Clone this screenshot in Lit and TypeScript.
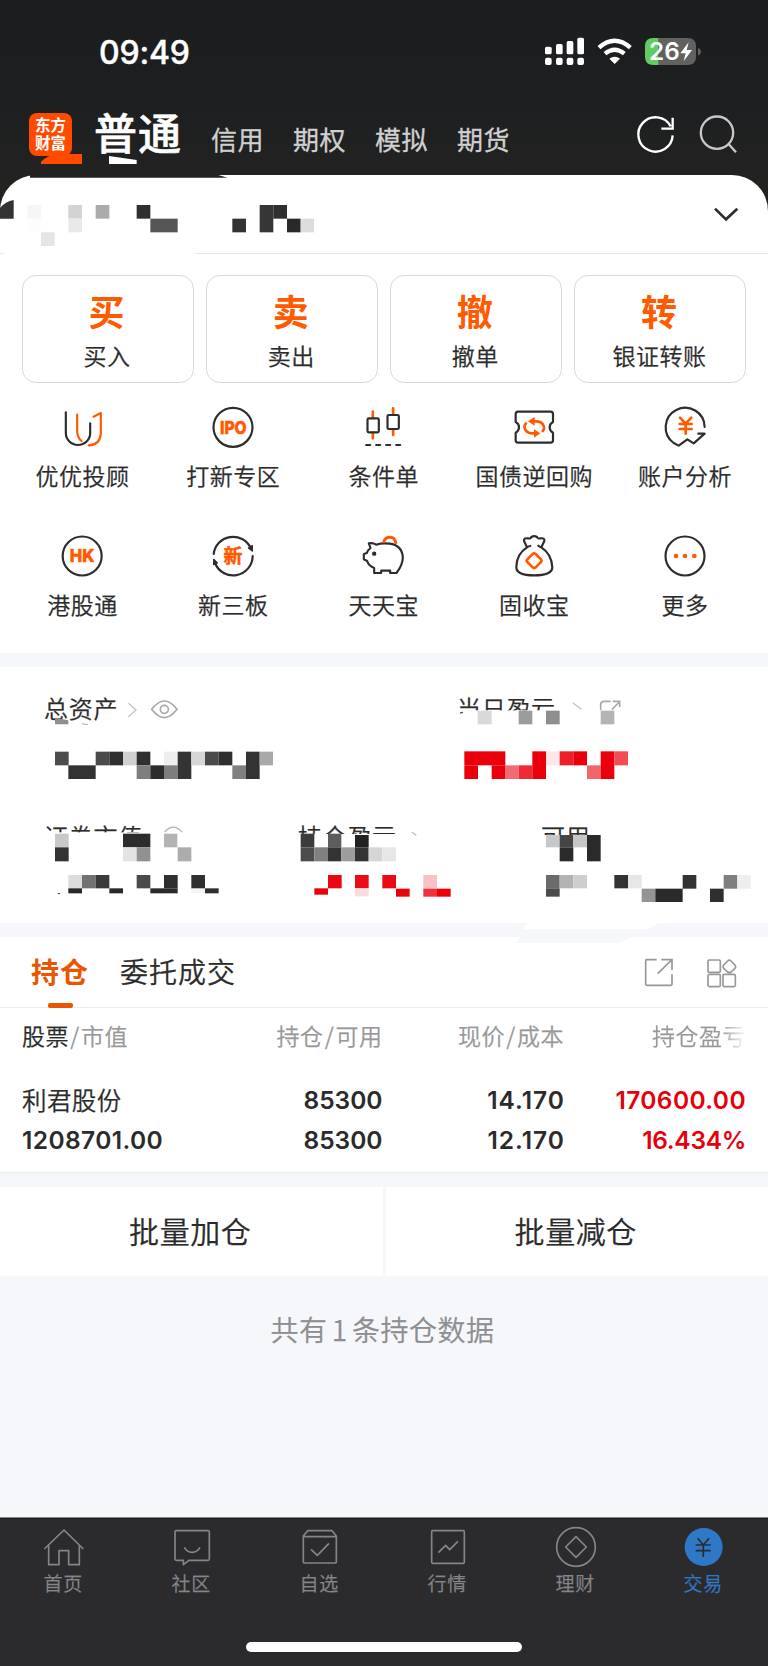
import { LitElement, html, svg, css } from "lit";
import { customElement } from "lit/decorators.js";

type Block = [number, number, number, number, string];

const blocks = (list: Block[]) =>
  list.map(([x, y, w, h, c]) => svg`<rect x=${x} y=${y} width=${w} height=${h} fill=${c}></rect>`);

const accountMask: Block[] = [
  [82, 615, 41, 41, "#f6f6f6"], [82, 656, 41, 41, "#fdfdfd"], [205, 615, 41, 41, "#d3d3d3"],
  [205, 656, 41, 41, "#e9e9e9"], [123, 697, 41, 41, "#e5e5e5"], [287, 615, 41, 41, "#ababab"],
  [410, 615, 41, 41, "#2f2f30"], [451, 656, 82, 41, "#555556"], [697, 656, 41, 41, "#333334"],
  [779, 615, 41, 82, "#363637"], [820, 615, 41, 41, "#2f2f30"], [861, 656, 41, 41, "#29292a"],
  [902, 656, 40, 41, "#dcdcdc"],
];

const assetMask: Block[] = [
  // total assets
  [165, 214, 41, 41, "#4c4c4d"], [205, 255, 82, 41, "#323233"], [287, 214, 41, 41, "#4a4a4b"],
  [328, 214, 41, 41, "#2f2f30"], [369, 214, 41, 41, "#d0d0d0"], [410, 214, 41, 41, "#303031"],
  [410, 255, 41, 41, "#7e7e7e"], [451, 255, 41, 41, "#2c2c2d"], [492, 214, 41, 41, "#eeeeee"],
  [492, 255, 41, 41, "#7e7e7e"], [533, 214, 41, 82, "#333334"], [574, 214, 41, 41, "#d6d6d6"],
  [615, 214, 41, 41, "#4a4a4b"], [656, 214, 41, 41, "#2f2f30"], [697, 255, 41, 41, "#808080"],
  [738, 214, 41, 82, "#333334"], [779, 214, 40, 41, "#a9a9a9"],
  // daily profit
  [1433, 91, 42, 41, "#d9d9d9"], [1556, 91, 41, 41, "#9c9c9c"], [1638, 91, 41, 41, "#8e8e8e"],
  [1802, 91, 41, 41, "#b4b4b4"],
  [1393, 213, 123, 42, "#ea000a"], [1393, 255, 41, 41, "#ea000a"], [1475, 255, 41, 41, "#ea000a"],
  [1515, 255, 41, 41, "#f36b72"], [1556, 255, 41, 41, "#ef2a34"], [1597, 213, 41, 83, "#ea000a"],
  [1638, 213, 41, 42, "#fce6e7"], [1679, 213, 41, 42, "#ee1f2a"], [1720, 213, 41, 42, "#ea000a"],
  [1761, 255, 41, 41, "#f3646b"], [1802, 213, 41, 83, "#ea000a"], [1843, 213, 41, 42, "#f24c55"],
  // securities value
  [165, 460, 41, 41, "#c8c8c8"], [165, 501, 41, 42, "#333334"], [369, 460, 82, 41, "#2c2c2d"],
  [369, 501, 41, 42, "#e3e3e3"], [410, 501, 41, 42, "#919191"], [492, 460, 40, 41, "#b3b3b3"],
  [533, 501, 41, 42, "#acacac"],
  [205, 584, 41, 40, "#dcdcdc"], [246, 584, 41, 40, "#727272"], [287, 584, 41, 40, "#3a3a3b"],
  [205, 624, 41, 15, "#29292a"], [328, 624, 41, 15, "#29292a"], [410, 584, 41, 40, "#4a4a4b"],
  [451, 624, 82, 15, "#2a2a2b"], [492, 584, 41, 40, "#2f2f30"], [574, 584, 41, 40, "#303031"],
  [574, 627, 41, 11, "#f4f4f4"], [615, 624, 41, 15, "#2f2f30"], [173, 638, 7, 3, "#444"],
  // position profit
  [902, 460, 41, 41, "#3c3c3d"], [902, 501, 41, 42, "#4c4c4d"], [943, 501, 41, 42, "#808080"],
  [984, 460, 40, 41, "#5d5d5e"], [984, 501, 40, 42, "#333334"], [1024, 501, 41, 42, "#9d9d9d"],
  [1065, 464, 41, 37, "#222223"], [1065, 501, 41, 42, "#333334"], [1106, 501, 41, 42, "#d5d5d5"],
  [1147, 501, 41, 42, "#e6e6e6"],
  [943, 624, 41, 19, "#ea000a"], [984, 584, 41, 40, "#ec0610"], [1065, 584, 41, 40, "#ec0c16"],
  [1065, 624, 41, 24, "#f9dcdd"], [1147, 584, 41, 40, "#ea0a14"], [1188, 625, 41, 24, "#ea000a"],
  [1270, 584, 41, 41, "#fac0c5"], [1270, 625, 41, 24, "#ef333d"], [1311, 625, 41, 24, "#ea000a"],
  // available
  [1638, 464, 41, 37, "#c8c8c8"], [1679, 464, 41, 37, "#454546"], [1679, 501, 41, 42, "#2a2a2b"],
  [1720, 464, 41, 37, "#c6c6c6"], [1761, 464, 41, 79, "#2a2a2b"],
  [1638, 584, 41, 40, "#6b6b6b"], [1638, 624, 41, 25, "#4c4c4d"], [1679, 584, 41, 40, "#b3b3b3"],
  [1720, 584, 41, 40, "#cecece"], [1843, 584, 41, 40, "#333334"], [1884, 584, 41, 40, "#e6e6e6"],
  [1925, 625, 41, 40, "#949494"], [1966, 625, 82, 40, "#2a2a2b"], [2048, 584, 41, 41, "#333334"],
  [2130, 625, 41, 40, "#2f2f30"], [2171, 584, 41, 41, "#7f7f7f"], [2212, 584, 40, 41, "#eeeeee"],
];

const primary = [["买", "买入"], ["卖", "卖出"], ["撤", "撤单"], ["转", "银证转账"]];

const tools = [
  { label: "优优投顾", box: "175.5 429 144 144", art: svg`
    <path d="M199 457V520A36.500 35 0 0 0 272 520V490"></path>
    <path class="o" d="M233 464V512Q233 532 246 543M282 470L304 459V520Q302 554 268 556"></path>` },
  { label: "打新专区", box: "627 429 144 144", art: svg`
    <circle cx="699" cy="502" r="58.500"></circle>
    <text class="t" x="700" y="521" font-size="52" textLength="80" lengthAdjust="spacingAndGlyphs">IPO</text>` },
  { label: "条件单", box: "1078.500 429 144 144", art: svg`
    <path class="o w" d="M1120 455V474M1120 518V535M1181 445V464M1181 508V525"></path>
    <rect x="1104" y="475" width="34" height="42" rx="4"></rect><rect x="1164" y="465" width="34" height="42" rx="4"></rect>
    <path d="M1100 555H1112M1130 555H1142M1160 555H1172M1190 555H1202"></path>` },
  { label: "国债逆回购", box: "380 429 144 144", art: svg`
    <path d="M404 455H502Q509 455 509 463V486Q499 491 499 502Q499 513 509 518V541Q509 548 502 548H404Q397 548 397 541V518Q407 513 407 502Q407 491 397 486V463Q397 455 404 455Z"></path>
    <path class="o w" d="M428 490Q420 498 426 509Q432 520 446 520H458M478 513Q486 504 479 494Q474 484 458 484H448"></path>
    <path class="f" d="M454 471V497L434 484ZM452 508V533L471 520Z"></path>` },
  { label: "账户分析", box: "832 429 144 144", art: svg`
    <path d="M963 501A58.500 58.500 0 1 0 870 549L885 557L911 538L930 550L963 521H944"></path>
    <path class="o w" d="M889 473L906 491L923 473M906 491V521M888 492H924M888 507H924"></path>` },
  { label: "港股通", box: "175.500 816 144 144", art: svg`
    <circle cx="248" cy="888" r="58.500"></circle>
    <text class="t" x="248" y="907" font-size="52" textLength="74" lengthAdjust="spacingAndGlyphs">HK</text>` },
  { label: "新三板", box: "627 816 144 144", art: svg`
    <path d="M641 882A58.500 58.500 0 0 1 752 864M758 888A58.500 58.500 0 0 1 645 909"></path>
    <path class="head-mark" d="M745 864L757 857V873ZM652 909L641 914V898Z"></path>
    <text class="t c" x="699" y="908" font-size="57">新</text>` },
  { label: "天天宝", box: "1078.500 816 144 144", art: svg`
    <g transform="translate(1050 810)"><path d="M58 40Q71 38 80 44Q98 38 120 41Q158 46 160 82Q160 105 141 129H122V122H95V129H74V114Q57 107 53 93L43 88V72L52 69Q55 60 63 54Z"></path>
    <path class="o x" d="M103 35Q107 22 122 22Q135 22 139 38"></path><circle cx="74" cy="71" r="6.500" fill="#2d2d2e" stroke="none"></circle></g>` },
  { label: "固收宝", box: "380 816 144 144", art: svg`
    <path d="M431 862L422 843Q421 833 434 835Q443 837 444 831Q453 826 461 831Q463 837 471 835Q485 833 483 843L474 862M431 862Q436 858 441 858M474 862Q468 860 465 857M431 862Q399 882 399 922Q400 946 452 946Q506 946 507 922Q505 882 474 862"></path>
    <path class="o w" d="M448 882Q452 878 457 882L473 898Q476 902 473 906L457 922Q452 926 448 922L432 906Q428 902 432 898Z"></path>` },
  { label: "更多", box: "832 816 144 144", art: svg`
    <circle cx="904" cy="888" r="58.500"></circle>
    <g fill="#ff5a00" stroke="none"><circle cx="877" cy="888" r="7"></circle><circle cx="904" cy="888" r="7"></circle><circle cx="932" cy="888" r="7"></circle></g>` },
];

const tabs = [
  { label: "首页", box: "121 66 144 144", art: svg`<path d="M134 144L193 87L251 144M147 134V191H178V149H207V191H239V134"></path>` },
  { label: "社区", box: "504 66 144 144", art: svg`<path d="M529 89H624Q628 89 628 93V174Q628 178 624 178H567L550 191V178H529Q525 178 525 174V93Q525 89 529 89ZM553 139Q561 154 576 154Q592 154 600 139"></path>` },
  { label: "自选", box: "888 66 144 144", art: svg`<path d="M923 89H996L1009 105V182Q1009 186 1005 186H914Q910 186 910 182V105ZM910 107H1009M933 145L952 163L987 127"></path>` },
  { label: "行情", box: "120 66 144 144", art: svg`<rect x="143" y="89" width="98" height="98" rx="3"></rect><path d="M163 155L185 133L197 146L222 121"></path>` },
  { label: "理财", box: "504 66 144 144", art: svg`<circle cx="576" cy="138" r="58"></circle><path d="M576 107L607 138L576 169L545 138Z"></path>` },
  { label: "交易", box: "889 66 144 144", on: true, art: svg`<circle cx="960" cy="138" r="57" fill="#2f78c8" stroke="none"></circle><path stroke="#2b2b2d" d="M942 112L959 132L976 112M959 132V168M936 132H981M936 149H981"></path>` },
];

@customElement("app-root")
export class AppRoot extends LitElement {
  static styles = css`
    :host { display: block; width: 768px; height: 1666px; overflow: hidden; background: #f6f7fa; color: #2b2b2c;
      font-family: "Noto Sans CJK SC", sans-serif; font-weight: 350; letter-spacing: 0.5px; -webkit-text-stroke: 0.25px currentColor; }
    * { box-sizing: border-box; }
    svg { display: block; overflow: visible; flex: none; }
    .page { display: flex; flex-direction: column; height: 1666px; }
    .top { background: linear-gradient(#1c1d1f, #1e1f21 110px, #222221 175px); height: 175px; flex: none; -webkit-text-stroke: 0; }
    .status { height: 104px; padding: 35px 64px 0 99px; display: flex; justify-content: space-between; }
    .clock { font: 500 32px/34px Inter, sans-serif; color: #fff; letter-spacing: -0.2px; padding-top: 1px; -webkit-text-stroke: 0.4px #fff; }
    .head { display: flex; height: 71px; align-items: flex-start; padding-left: 29px; }
    .logo { width: 43px; height: 43px; margin-top: 9px; border-radius: 8px; background: #ff4a00; color: #fff;
      font-size: 15.500px; line-height: 18px; font-weight: 700; letter-spacing: 0; text-align: center; padding-top: 2px; position: relative; }
    .shard { position: absolute; left: 0; top: 0; }
    .main { font-size: 43px; font-weight: 500; color: #fff; line-height: 60px; margin: -3px 0 0 22px; letter-spacing: 1px; position: relative; -webkit-text-stroke: 0.6px #fff; }
    .main .shard { top: 1px; }
    .modes { display: flex; gap: 29px; margin: 18px 0 0 29px; font-size: 26px; line-height: 34px; color: #d0d0d0; font-weight: 400; -webkit-text-stroke: 0.3px #d0d0d0; }
    .actions { margin: 1px 26px 0 auto; }
    .card { background: linear-gradient(#222221 36px, #fff 36px); height: 79px; flex: none; }
    .sheet { background: #fff; border-radius: 36px 36px 0 0; height: 79px; }
    .ops { background: #fff; height: 398.500px; flex: none; padding: 21px 22px 0 21.500px; }
    .primary { display: grid; grid-template-columns: repeat(4, 172px); justify-content: space-between; }
    .btn { height: 108px; border: 1px solid #d9d9d9; border-radius: 14px; text-align: center; }
    .big { color: #ff5a00; font-weight: 700; font-size: 36px; line-height: 40px; margin: 14px 2px 0 0; letter-spacing: 0; -webkit-text-stroke: 0; }
    .small { font-size: 23px; line-height: 30px; margin: 10px 1px 0 0; }
    .tools { display: grid; grid-template-columns: repeat(5, 150.600px); margin: 20px -15px 0 -14.500px; row-gap: 37px; }
    .tool { height: 92px; display: flex; flex-direction: column; align-items: center; font-size: 23px; line-height: 30px; white-space: nowrap; }
    .tool svg { fill: none; stroke: #2d2d2e; stroke-width: 6.500; stroke-linecap: round; stroke-linejoin: round; }
    .tool .o { stroke: #ff5a00; }
    .tool .w { stroke-width: 8; }
    .tool .x { stroke-width: 9; }
    .tool .f { fill: #ff5a00; stroke: none; }
    .tool .head-mark { fill: #2d2d2e; stroke-width: 4; }
    .tool .t { fill: #ff5a00; stroke: #ff5a00; stroke-width: 1.500; font-family: Inter, sans-serif; font-weight: 800; text-anchor: middle; letter-spacing: 0; -webkit-text-stroke: 1px #ff5a00; }
    .tool .t.c { font-family: "Noto Sans CJK SC", sans-serif; font-weight: 700; }
    .tool span { margin: 8.500px 0 0 0.500px; }
    .assets { margin-top: 14px; height: 256.500px; flex: none; background: #fff; position: relative; font-size: 24px; line-height: 32px; padding-top: 25px; }
    .line1 { display: grid; grid-template-columns: 413px 1fr; padding-left: 44px; letter-spacing: 0.700px; }
    .line2 { display: grid; grid-template-columns: 254px 243px 1fr; padding-left: 44px; margin-top: 96px; letter-spacing: 0.700px; }
    .mask { position: absolute; left: 0; top: 0; }
    .band { height: 14px; flex: none; position: relative; }
    .tabs { height: 71px; flex: none; background: #fff; border-bottom: 1px solid #ebecee; display: flex; align-items: flex-start; padding: 15px 30px 0 31px; font-size: 28px; line-height: 38px; }
    .tab { margin-right: 31px; letter-spacing: 1px; }
    .tab.on { color: #ea5504; font-weight: 700; -webkit-text-stroke: 0; }
    .tab.on::after { content: ""; display: block; width: 25px; height: 5px; border-radius: 2px; background: #ea5504; margin: 12.500px 0 0 16.500px; }
    .tabs svg { margin-left: auto; margin-top: 4px; }
    .table { background: #fff; height: 164.500px; flex: none; border-bottom: 1px solid #ececee; padding: 11px 22px 0; }
    .row { display: grid; grid-template-columns: 180px 180.500px 181.500px 182px; text-align: right; }
    .row > :first-child { text-align: left; }
    .cap { color: #98989a; font-size: 23px; line-height: 32px; }
    .cap b { color: #2b2b2c; font-weight: 350; }
    .cap i { font-style: normal; margin: 0 1.200px; }
    .fade { background: linear-gradient(90deg, #98989a 72%, #ffffff 101%); -webkit-background-clip: text; background-clip: text; color: transparent; }
    .vals { font: 600 24.500px/40px Inter, sans-serif; letter-spacing: 0; -webkit-text-stroke: 0; }
    .vals .name { font-family: "Noto Sans CJK SC", sans-serif; font-size: 24.500px; font-weight: 350; letter-spacing: 0.400px; -webkit-text-stroke: 0.25px #2b2b2c; }
    .vals.first { margin-top: 29px; }
    .price { letter-spacing: 1px; margin-right: -1px; }
    .wide { letter-spacing: 0.400px; }
    .tight { letter-spacing: -0.300px; }
    .red { color: #e6000c; }
    .batch { margin-top: 14.500px; height: 89px; flex: none; display: grid; grid-template-columns: 1fr 1fr; gap: 3px; text-align: center; font-size: 30px; line-height: 86px; letter-spacing: 0.600px; }
    .batch div { background: #fff; padding-right: 2px; }
    .foot { flex: 1; text-align: center; padding: 33px 3px 0 0; font-size: 28px; line-height: 40px; color: #8e8e90; word-spacing: -2.500px; }
    .nav { height: 148.500px; flex: none; background: #2b2b2d; border-top: 1px solid #1a1a1b; box-shadow: 0 -1px #8a8a8c; color: #858489; }
    .items { display: grid; grid-template-columns: repeat(6, 128px); height: 123.500px; padding-top: 4px; }
    .item { display: flex; flex-direction: column; align-items: center; font-size: 19px; line-height: 26px; }
    .item svg { fill: none; stroke: #858489; stroke-width: 5; stroke-linejoin: round; }
    .item span { margin: -1px 1.500px 0 0; letter-spacing: 0.700px; }
    .item.on { color: #2f78c8; }
    .home { width: 276px; height: 9.500px; border-radius: 5px; background: #fff; margin: 0 auto; }
  `;

  render() {
    return html`<div class="page">
      <div class="top">
        <div class="status">
          <div class="clock">09:49</div>
          <svg width="160" height="33" viewBox="480 105 480 99">
            <g fill="#fff">
              <rect x="483" y="140" width="20" height="23" rx="5"></rect><rect x="516" y="132" width="20" height="31" rx="5"></rect>
              <rect x="548" y="123" width="20" height="40" rx="5"></rect><rect x="580" y="113" width="20" height="50" rx="5"></rect>
              <rect x="483" y="173" width="20" height="22" rx="6"></rect><rect x="516" y="173" width="20" height="22" rx="6"></rect>
              <rect x="548" y="173" width="20" height="22" rx="6"></rect><rect x="580" y="173" width="20" height="22" rx="6"></rect>
              <path d="M676 176Q692 164 708 176L692 192Z"></path>
            </g>
            <path d="M645 143Q692 102 739 143M663 161Q692 137 721 161" fill="none" stroke="#fff" stroke-width="13"></path>
            <path d="M808 114H824V195H808Q783 195 783 170V139Q783 114 808 114Z" fill="#62cc63"></path>
            <path d="M824 114H911Q936 114 936 139V170Q936 195 911 195H824Z" fill="#616162"></path>
            <path d="M942 143Q951 147 951 155Q951 163 942 167Z" fill="#616162"></path>
            <text x="795" y="181" font-size="71" font-family="Inter, sans-serif" font-weight="600" letter-spacing="0" fill="#fff" textLength="92" lengthAdjust="spacingAndGlyphs">26</text>
            <path d="M914 127L889 160H905L899 184L924 150H908Z" fill="#fff"></path>
          </svg>
        </div>
        <div class="head">
          <div class="logo">东方<br>财富
            <svg class="shard" width="60" height="60" viewBox="87 339 180 180"><path fill="#ff4a00" d="M123 486Q143 463 180 462H246V492H123Z"></path></svg>
          </div>
          <div class="main">普通
            <svg class="shard" width="90" height="60" viewBox="282 306 270 180"><path fill="#fff" d="M327 468L410 480V492H327Z"></path></svg>
          </div>
          <div class="modes"><span>信用</span><span>期权</span><span>模拟</span><span>期货</span></div>
          <svg class="actions" width="108" height="60" viewBox="750 313 324 180" fill="none" stroke-width="7">
            <path stroke="#fff" d="M866 404A51.500 51.500 0 1 1 860 377M866 351V384H832"></path>
            <g stroke="#c8c8c8"><circle cx="999" cy="396" r="48.500"></circle><path d="M1033 429L1056 455"></path></g>
          </svg>
        </div>
      </div>
      <div class="card"><div class="sheet">
        <svg width="768" height="78" viewBox="0 525 2304 234">
          <path fill="#222324" d="M90 523H648L682 533H90Z"></path>
          <path fill="#333334" d="M-1 625Q15 605 41 600V656H-1Z"></path>
          ${blocks(accountMask)}
          <path d="M2145 626L2178 658L2212 626" stroke="#2d2d2e" stroke-width="8" fill="none"></path>
          <path d="M0 760.500H10M585 760.500H2304" stroke="#e8e8ea" stroke-width="3"></path>
        </svg>
      </div></div>
      <div class="ops">
        <div class="primary">${primary.map(([a, b]) => html`<div class="btn"><div class="big">${a}</div><div class="small">${b}</div></div>`)}</div>
        <div class="tools">${tools.map((t) => html`<div class="tool"><svg width="48" height="48" viewBox=${t.box}>${t.art}</svg><span>${t.label}</span></div>`)}</div>
      </div>
      <div class="assets">
        <div class="line1"><span>总资产</span><span>当日盈亏</span></div>
        <div class="line2"><span>证券市值</span><span>持仓盈亏</span><span>可用</span></div>
        <svg class="mask" width="768" height="256" viewBox="0 -40 2304 768">
          <path d="M385 69L408 89L385 109" fill="none" stroke="#c4c4c6" stroke-width="4"></path>
          <g fill="none" stroke="#a9a9ab" stroke-width="5"><path d="M455 87Q493 37 531 87Q493 137 455 87Z"></path><circle cx="493" cy="87" r="12"></circle></g>
          <path d="M1718 67L1744 87" stroke="#c4c4c6" stroke-width="4"></path>
          <path d="M1802 90V72Q1802 63 1812 63H1832M1836 87L1858 65M1838 63H1859V80" fill="none" stroke="#a9a9ab" stroke-width="5"></path>
          <g fill="#fff">
            <rect x="1340" y="90" width="600" height="50"></rect><rect x="120" y="456" width="700" height="80"></rect>
            <rect x="880" y="461" width="420" height="75"></rect><rect x="1600" y="464" width="300" height="75"></rect>
          </g>
          <path d="M494 455Q519 426 546 455" fill="none" stroke="#b4b4b6" stroke-width="4"></path>
          <path d="M1235 455L1249 465" stroke="#c4c4c6" stroke-width="4"></path>
          <path d="M165 112L205 120V132H165Z" fill="#8e8e8e"></path>
          <path d="M246 130Q256 133 264 132" fill="none" stroke="#a9a9ab" stroke-width="3"></path>
          <path d="M1380 98L1389 96" stroke="#555" stroke-width="4"></path>
          ${blocks(assetMask)}
        </svg>
      </div>
      <div class="band"><svg width="768" height="14" viewBox="0 728 2304 42">
        <path fill="#fff" d="M1584 727H1978L1942 747H1566Z"></path><path fill="#f6f7fa" d="M1560 769H1899L1858 788H1549Z"></path>
      </svg></div>
      <div class="tabs">
        <div class="tab on">持仓</div><div class="tab">委托成交</div>
        <svg width="94" height="34" viewBox="780 107 282 102" fill="none" stroke="#98989a" stroke-width="5">
          <path d="M818 118H788Q785 118 785 121V192Q785 195 788 195H861Q864 195 864 192V162M832 118H864V149M864 118L821 160"></path>
          <rect x="972" y="119" width="37" height="37" rx="4"></rect><rect x="972" y="162" width="37" height="37" rx="4"></rect><rect x="1017" y="162" width="37" height="37" rx="4"></rect>
          <path d="M1031 122Q1036 117 1041 122L1053 134Q1057 139 1053 144L1041 155Q1036 159 1031 155L1019 144Q1015 139 1019 134Z"></path>
        </svg>
      </div>
      <div class="table">
        <div class="row cap"><span><b>股票</b><i>/</i>市值</span><span>持仓<i>/</i>可用</span><span>现价<i>/</i>成本</span><span><span class="fade">持仓盈亏</span></span></div>
        <div class="row vals first"><span class="name">利君股份</span><span>85300</span><span class="price">14.170</span><span class="red wide">170600.00</span></div>
        <div class="row vals"><span class="wide">1208701.00</span><span>85300</span><span class="price">12.170</span><span class="red tight">16.434%</span></div>
      </div>
      <div class="batch"><div>批量加仓</div><div>批量减仓</div></div>
      <div class="foot">共有 1 条持仓数据</div>
      <div class="nav">
        <div class="items">${tabs.map((t) => html`<div class="item ${t.on ? "on" : ""}"><svg width="48" height="48" viewBox=${t.box}>${t.art}</svg><span>${t.label}</span></div>`)}</div>
        <div class="home"></div>
      </div>
    </div>`;
  }
}
